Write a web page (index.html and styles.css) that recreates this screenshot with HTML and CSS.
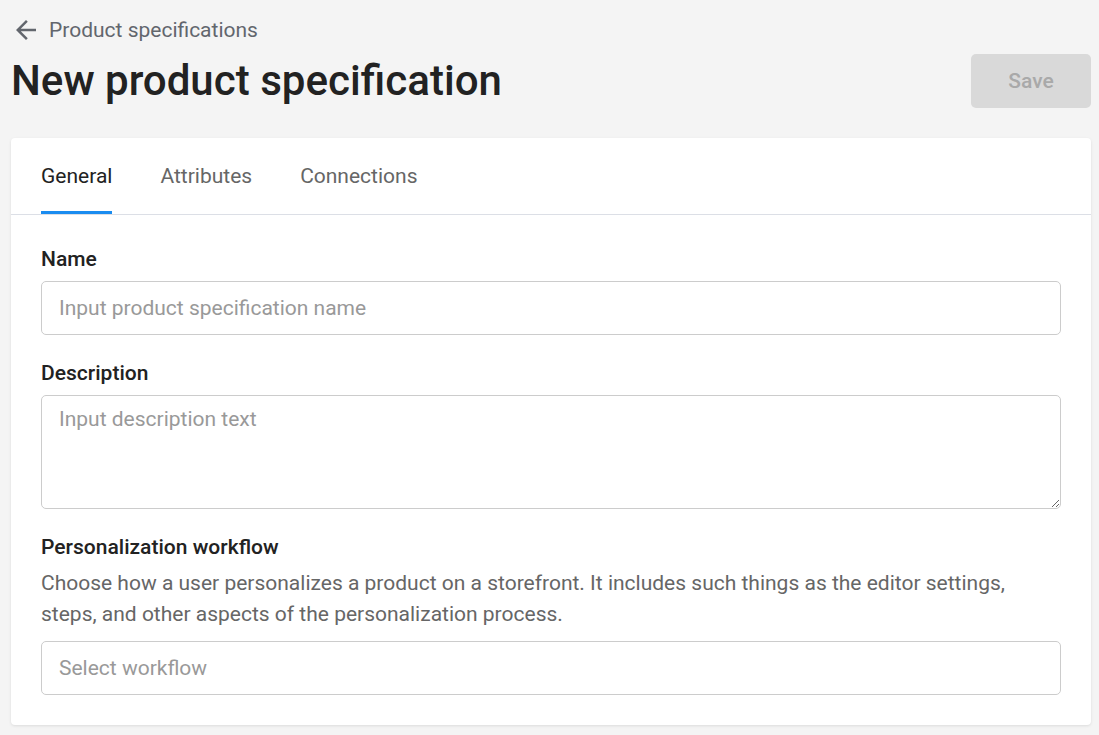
FILE: index.html
```html
<!DOCTYPE html>
<html lang="en">
<head>
    <meta charset="UTF-8">
    <title>New product specification</title>
    <link rel="stylesheet" href="styles.css">
</head>
<body>

    <!-- Page header -->
    <a class="back-link" href="#">
        <svg class="back-icon" viewBox="0 0 24 24" width="30" height="30">
            <path d="M20 11H7.83l5.59-5.59L12 4l-8 8 8 8 1.41-1.41L7.83 13H20v-2z"/>
        </svg>
        <span>Product specifications</span>
    </a>

    <div class="page-header">
        <h1>New product specification</h1>
        <button class="save-btn" disabled>Save</button>
    </div>

    <!-- Form card -->
    <div class="card">
        <div class="tabs">
            <div class="tab active">General</div>
            <div class="tab">Attributes</div>
            <div class="tab">Connections</div>
        </div>

        <form class="form">
            <div class="form-group">
                <label for="name">Name</label>
                <input type="text" id="name" placeholder="Input product specification name">
            </div>
            <div class="form-group">
                <label for="description">Description</label>
                <textarea id="description" placeholder="Input description text"></textarea>
            </div>
            <div class="form-group">
                <label>Personalization workflow</label>
                <p class="hint">Choose how a user personalizes a product on a storefront. It includes such things as the editor settings, steps, and other aspects of the personalization process.</p>
                <div class="select">Select workflow</div>
            </div>
        </form>
    </div>

</body>
</html>
```

FILE: styles.css
```css
* {
  margin: 0;
  padding: 0;
  box-sizing: border-box;
}

body {
  background-color: #f4f4f4;
  color: #222;
  font-family: Roboto, "Liberation Sans", sans-serif;
  padding: 15px 8px 10px 11px;
}

.back-link {
  display: flex;
  align-items: center;
  gap: 8px;
  height: 30px;
  color: #62666d;
  font-size: 21px;
  text-decoration: none;
}

.back-icon {
  fill: #62666d;
}

.page-header {
  display: flex;
  justify-content: space-between;
  align-items: center;
  margin-top: 9px;
  margin-bottom: 30px;
}

h1 {
  font-family: "Roboto Medium", Roboto, sans-serif;
  font-size: 42px;
  font-weight: 500;
  line-height: 54px;
  color: #222;
}

.save-btn {
  width: 120px;
  height: 54px;
  background: #d9d9d9;
  color: #a9a9a9;
  border: none;
  border-radius: 5px;
  font-family: "Roboto Medium", Roboto, sans-serif;
  font-size: 21px;
  font-weight: 500;
}

.card {
  background: #fff;
  border-radius: 4px;
  box-shadow: 0 1px 3px rgba(0, 0, 0, 0.1);
}

.tabs {
  display: flex;
  gap: 48px;
  padding: 0 30px;
  border-bottom: 1px solid #dcdfe6;
}

.tab {
  font-size: 21px;
  line-height: 24px;
  color: #666;
  padding: 26px 0 23px;
  border-bottom: 3px solid transparent;
}

.tab.active {
  color: #222;
  border-bottom-color: #1a8cf0;
}

.form {
  padding: 32px 30px 30px;
}

.form-group {
  margin-bottom: 26px;
}

.form-group:last-child {
  margin-bottom: 0;
}

label {
  display: block;
  font-family: "Roboto Medium", Roboto, sans-serif;
  font-size: 21px;
  font-weight: 500;
  line-height: 24px;
  margin-bottom: 10px;
}

input,
textarea,
.select {
  display: block;
  width: 100%;
  border: 1px solid #ccc;
  border-radius: 5px;
  font-family: inherit;
  font-size: 21px;
  color: #222;
  outline: none;
}

input,
.select {
  height: 54px;
  padding: 0 17px;
}

.select {
  display: flex;
  align-items: center;
  color: #999;
}

textarea {
  height: 114px;
  padding: 11px 17px;
  line-height: 24px;
  resize: vertical;
}

input::placeholder,
textarea::placeholder {
  color: #999;
}

.hint {
  font-size: 21px;
  line-height: 31px;
  color: #666;
  margin-top: -1px;
  margin-bottom: 11px;
}
```
